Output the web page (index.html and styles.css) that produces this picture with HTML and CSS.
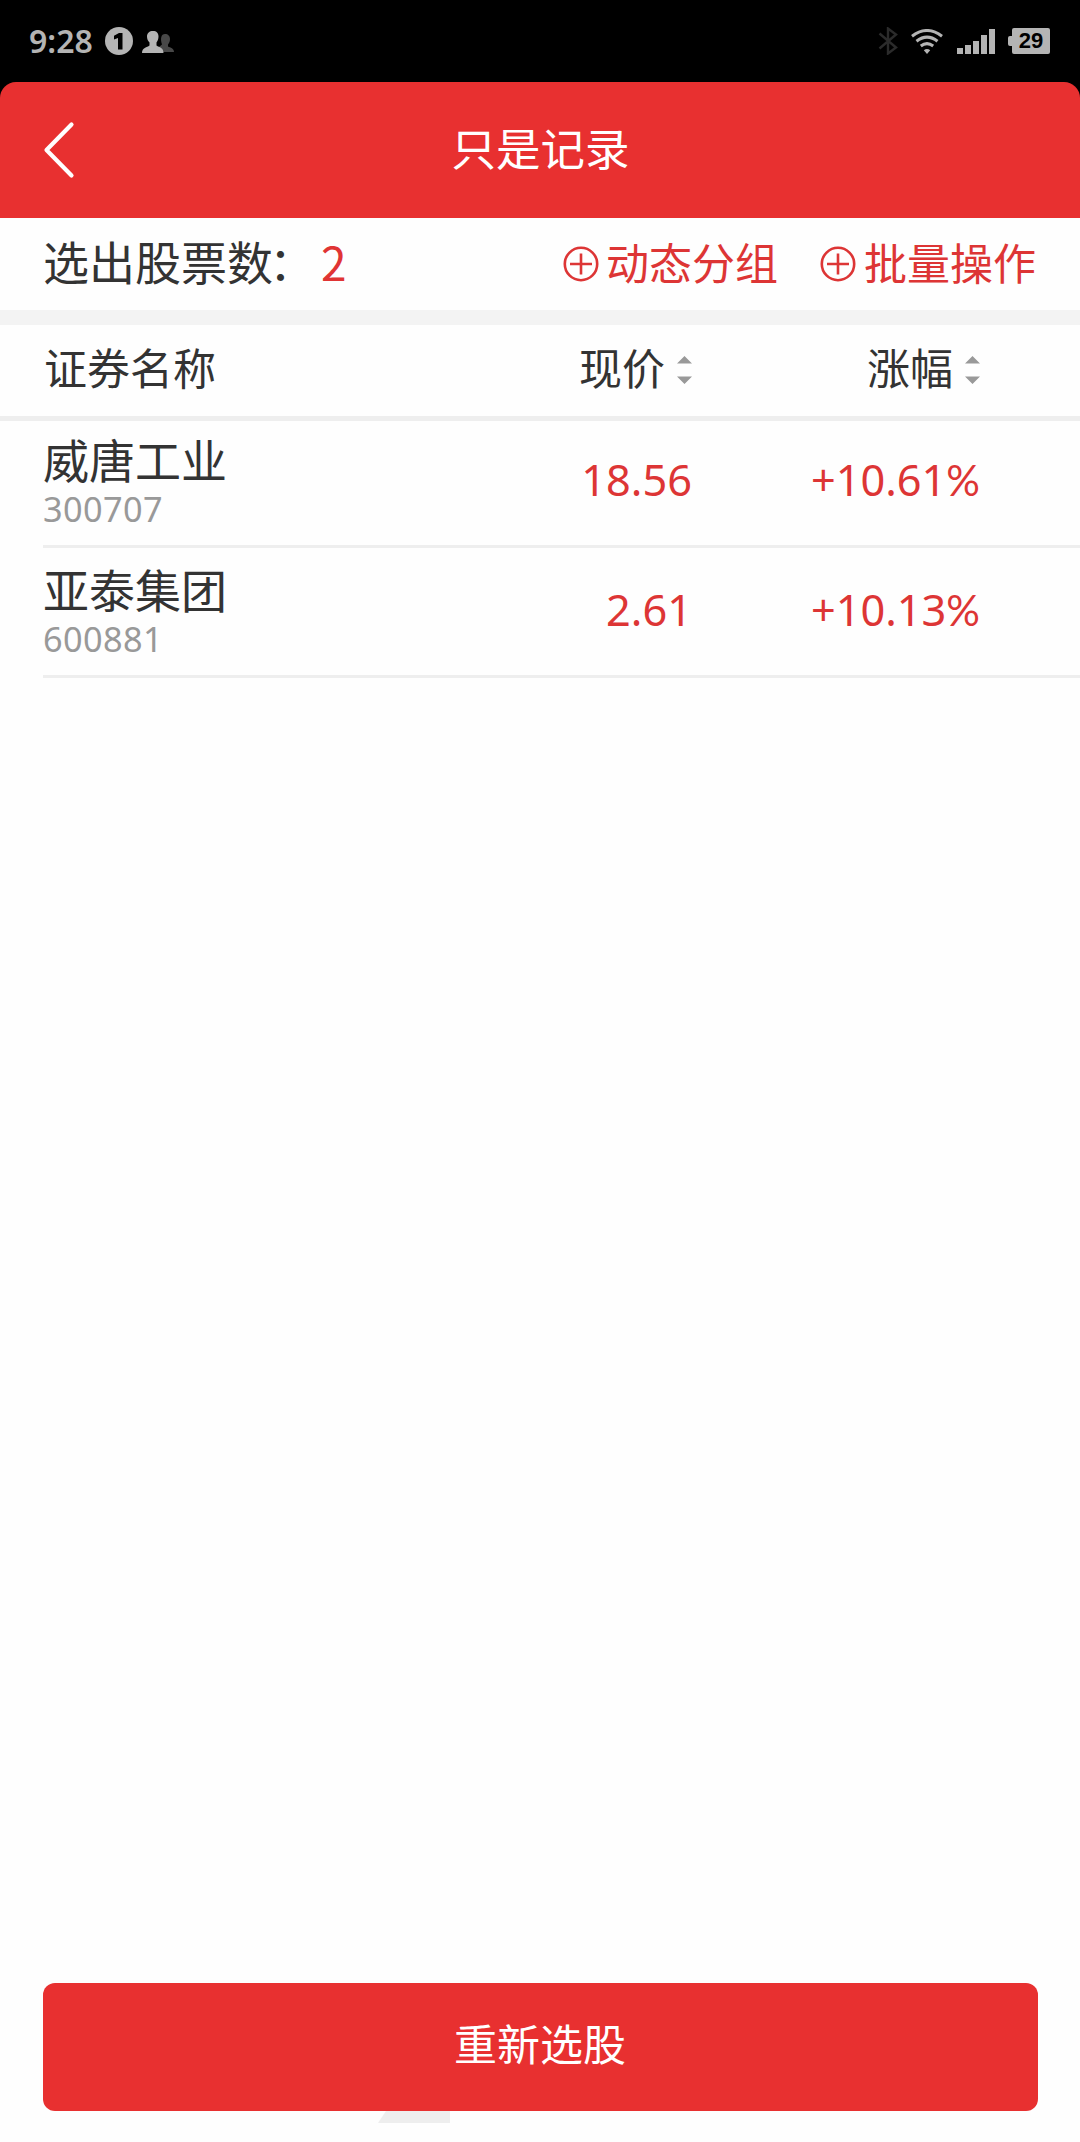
FILE: index.html
```html
<!DOCTYPE html>
<html lang="zh-CN">
<head>
<meta charset="utf-8">
<title>只是记录</title>
<link rel="stylesheet" href="styles.css">
</head>
<body>
<div class="screen">
  <div class="status">
    <span class="clock">9:28</span>
    <span class="badge"><svg width="28" height="28" viewBox="0 0 28 28"><circle cx="14" cy="14" r="14" fill="#b4b4b4"/><path d="M9 8.800L14 6H17.500V22.500H13V11L9 12.500Z" fill="#000"/></svg></span>
    <svg class="people" width="33" height="23" viewBox="0 0 33 23"><path d="M23 3c3 0 5 2 5 5 0 2-.7 4-2 5.500v2c2.500 1.200 6 1.800 6 5.500H20l-3-5 3-2.500C18 8 19 3 23 3z" fill="#484848"/><path d="M11 0c3.500 0 5.500 2 5.500 5.500 0 2.500-1 4.500-2 6v3c3 2 7 2 7 7.500H0c0-5.500 5-5.500 7.500-7.500v-3c-1.500-1.500-2.500-3.500-2.500-6C5 2 7.500 0 11 0z" fill="#b4b4b4"/></svg>
    <svg class="bluetooth" width="20" height="28" viewBox="0 0 20 28"><path d="M1.500 6.500L18 20.500 10 26.500V1.500L18 7.500 1.500 21.500" fill="none" stroke="#2b2b2b" stroke-width="2.400"/></svg>
    <svg class="wifi" width="32" height="25" viewBox="0 0 32 25"><g fill="none" stroke="#b4b4b4" stroke-width="3"><path d="M1 7.300Q16-4.300 31 7.300"/><path d="M5.500 12.200Q16 4 26.500 12.200"/><path d="M9.800 17Q16 12.200 22.200 17"/></g><path d="M12.800 21.300Q16 18.800 19.200 21.300L16 25z" fill="#b4b4b4"/></svg>
    <svg class="signal" width="38" height="25" viewBox="0 0 38 25"><path d="M0 19h6v6H0zM8 16h6v9H8zM16 12h6v13h-6zM24 6h6v19h-6zM32 0h6v25h-6z" fill="#b4b4b4"/></svg>
    <span class="battery"><i class="cap"></i><b class="level">29</b></span>
  </div>
  <header class="titlebar">
    <svg class="back" width="32" height="58" viewBox="0 0 32 58"><path d="M28.500 3.500L3.500 29 28.500 54.500" fill="none" stroke="#fff" stroke-width="4.200" stroke-linecap="round" stroke-linejoin="round"/></svg>
    <h1 class="title">只是记录</h1>
  </header>
  <section class="summary">
    <span class="total">选出股票数<span class="colon">：</span></span><span class="count">2</span>
    <a class="action dynamic"><svg class="plus" width="36" height="36" viewBox="0 0 36 36"><g fill="none" stroke="#dd3535" stroke-width="2.600"><circle cx="18" cy="18" r="16.200"/><path d="M7 18H29M18 7.500V28.500"/></g></svg><span>动态分组</span></a>
    <a class="action batch"><svg class="plus" width="36" height="36" viewBox="0 0 36 36"><g fill="none" stroke="#dd3535" stroke-width="2.600"><circle cx="18" cy="18" r="16.200"/><path d="M7 18H29M18 7.500V28.500"/></g></svg><span>批量操作</span></a>
  </section>
  <div class="columns">
    <span class="col-name">证券名称</span>
    <span class="col-price">现价<svg class="sort" width="15" height="28" viewBox="0 0 15 28"><path d="M0 7.500L7.500 0 15 7.500zM0 20.500H15L7.500 28z" fill="#999"/></svg></span>
    <span class="col-change">涨幅<svg class="sort" width="15" height="28" viewBox="0 0 15 28"><path d="M0 7.500L7.500 0 15 7.500zM0 20.500H15L7.500 28z" fill="#999"/></svg></span>
  </div>
  <main class="list">
    <div class="row">
      <div class="stock"><span class="name">威唐工业</span><span class="code">300707</span></div>
      <span class="price">18.56</span>
      <span class="change">+10.61<span class="percent">%</span></span>
    </div>
    <div class="row">
      <div class="stock"><span class="name">亚泰集团</span><span class="code">600881</span></div>
      <span class="price">2.61</span>
      <span class="change">+10.13<span class="percent">%</span></span>
    </div>
  </main>
  <footer class="footer">
    <button class="again">重新选股</button>
    <svg class="shade" width="72" height="12" viewBox="0 0 72 12"><path d="M8 0H72V12H0z" fill="#eeeeee"/></svg>
  </footer>
</div>
</body>
</html>
```
FILE: styles.css
```css
* { box-sizing: border-box; }
body { margin: 0; background: #000; }
.screen {
  width: 1080px;
  height: 2142px;
  display: flex;
  flex-direction: column;
  font-family: "Noto Sans CJK SC", "Noto Sans", sans-serif;
  color: #333;
  background: linear-gradient(#000 0 120px, #fefefe 120px);
  white-space: nowrap;
}
svg { display: block; flex: none; }

.status {
  height: 82px;
  flex: none;
  display: flex;
  align-items: center;
  padding: 0 30px 0 29px;
}
.clock {
  width: 76px;
  font: 600 32px/40px "Noto Sans", sans-serif;
  color: #b4b4b4;
}
.people { margin-left: 9px; margin-top: 2px; }
.bluetooth { margin-left: auto; }
.wifi { margin-left: 13px; }
.signal { margin-left: 14px; }
.battery { display: flex; align-items: center; margin-left: 13px; }
.cap { width: 4px; height: 10px; border-radius: 2px 0 0 2px; background: #b4b4b4; }
.level {
  width: 38px;
  height: 26px;
  border-radius: 2px;
  background: #b4b4b4;
  color: #000;
  font: 700 22px/26px "Liberation Sans", sans-serif;
  text-align: center;
}

.titlebar {
  height: 136px;
  flex: none;
  display: grid;
  grid-template-columns: 110px 1fr 110px;
  align-items: center;
  border-radius: 16px 16px 0 0;
  background: #e83030;
}
.back { margin-left: 43px; }
.title {
  margin: 0;
  padding: 0 0 6px 1px;
  font-size: 44.500px;
  font-weight: 400;
  line-height: 50px;
  text-align: center;
  color: #fff;
}

.summary {
  height: 107px;
  flex: none;
  display: flex;
  align-items: center;
  padding: 0 44px 9px 43px;
  border-bottom: 15px solid #f3f3f3;
  line-height: 50px;
}
.total { width: 278px; font-size: 46px; }
.colon { margin-left: -4px; }
.count { font-size: 46px; color: #e03434; padding-top: 2px; }
.action { display: flex; align-items: center; gap: 7px; font-size: 43px; color: #dd3535; padding-top: 2px; }
.plus { margin-top: 7px; }
.dynamic { margin-left: auto; }
.batch { gap: 8px; margin-left: 42px; }

.columns {
  height: 96px;
  flex: none;
  display: grid;
  grid-template-columns: 1fr 240px 288px;
  align-items: center;
  padding: 0 100px 10px 44px;
  border-bottom: 5px solid #eee;
  font-size: 43px;
  line-height: 50px;
}
.col-price, .col-change { display: flex; align-items: center; justify-content: flex-end; gap: 12px; }
.sort { margin-top: 8px; }

.list { margin-top: -3px; flex: 1; }
.row {
  height: 130px;
  margin-left: 43px;
  padding-right: 100px;
  display: grid;
  grid-template-columns: 1fr 240px 288px;
  align-items: center;
  border-bottom: 3px solid #eee;
}
.stock {
  align-self: start;
  display: flex;
  flex-direction: column;
  gap: 7.500px;
  padding-top: 20.500px;
}
.name { font: 400 46px/46px "Liberation Sans", "Noto Sans CJK SC", sans-serif; }
.code { font: 400 34.300px/34px "Noto Sans", sans-serif; letter-spacing: .4px; color: #999; }
.price, .change {
  padding-bottom: 3px;
  font: 400 43.300px/50px "Noto Sans", sans-serif;
  text-align: right;
  color: #dd3535;
}
.percent { font-family: Lato, sans-serif; font-size: 42px; }

.footer { height: 159px; flex: none; padding: 0 42.500px; }
.again {
  display: block;
  width: 100%;
  height: 128px;
  padding: 0 0 10px;
  border: 0;
  border-radius: 12px;
  background: #e83030;
  color: #fff;
  font: 400 43px/50px "Noto Sans CJK SC", sans-serif;
}
.shade { margin-left: 335px; }
```
